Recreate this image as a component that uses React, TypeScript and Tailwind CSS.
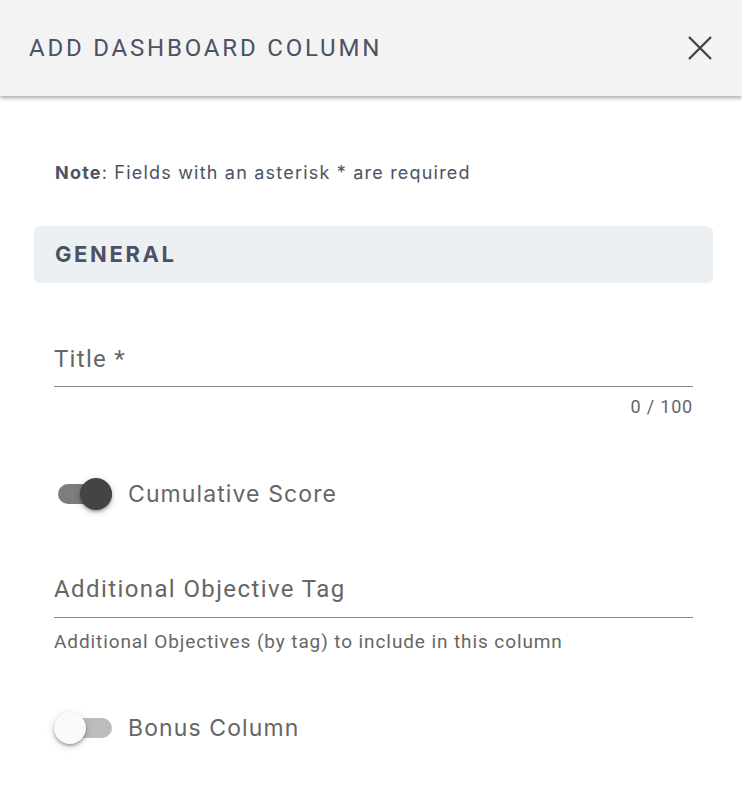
function Toggle({ on }: { on: boolean }) {
  return (
    <div className="relative h-[32px] w-[58px] shrink-0">
      <div
        className={`absolute left-[4px] right-0 top-[6px] h-[20px] rounded-full ${on ? "bg-[#7d7d7d]" : "bg-[#bdbdbd]"}`}
      />
      <div
        className={`absolute top-0 h-[32px] w-[32px] rounded-full shadow-[0_2px_3px_rgba(0,0,0,0.3),0_2px_8px_rgba(0,0,0,0.15)] ${
          on ? "right-0 bg-[#444444]" : "left-0 bg-[#fafafa]"
        }`}
      />
    </div>
  );
}

function CloseIcon() {
  return (
    <svg width="26" height="26" viewBox="0 0 26 26" fill="none" stroke="#444" strokeWidth="2.4" strokeLinecap="butt">
      <path d="M2 2L24 24M24 2L2 24" />
    </svg>
  );
}

export default function App() {
  return (
    <div className="min-h-[790px] w-[742px] bg-white font-['Roboto',sans-serif]">
      <header className="relative z-10 flex h-[96px] items-center justify-between bg-[#f3f3f3] pl-[29px] pr-[29px] shadow-[0_2px_4px_rgba(0,0,0,0.35)]">
        <h1 className="text-[24px] leading-[28px] tracking-[2.8px] text-[#4b5263]">ADD DASHBOARD COLUMN</h1>
        <CloseIcon />
      </header>

      <div className="pl-[34px] pr-[29px] pt-[66px]">
        <p className="pl-[21px] font-['Inter',sans-serif] text-[18px] leading-[22px] tracking-[1.2px] text-[#4b5263]">
          <span className="font-bold">Note</span>: Fields with an asterisk * are required
        </p>

        <div className="mt-[42px] flex h-[57px] items-center rounded-[6px] bg-[#edf0f3] px-[21px]">
          <h2 className="font-['Inter',sans-serif] text-[22px] font-bold tracking-[2.6px] text-[#4b5263]">GENERAL</h2>
        </div>

        <div className="px-[20px]">
          <div className="mt-[62px]">
            <div className="border-b border-[#8a8a8a] pb-[13px] text-[24px] leading-[28px] tracking-[1.3px] text-[#666]">
              Title *
            </div>
            <div className="mt-[10px] text-right text-[18px] leading-[20px] tracking-[0.8px] text-[#666]">0 / 100</div>
          </div>

          <div className="mt-[62px] flex h-[30px] items-center gap-[16px]">
            <Toggle on />
            <span className="font-['Inter',sans-serif] text-[23px] leading-[30px] tracking-[1.1px] text-[#666]">
              Cumulative Score
            </span>
          </div>

          <div className="mt-[66px]">
            <div className="border-b border-[#8a8a8a] pb-[14px] text-[24px] leading-[28px] tracking-[1.4px] text-[#666]">
              Additional Objective Tag
            </div>
            <div className="mt-[13px] text-[19px] leading-[22px] tracking-[0.9px] text-[#666]">
              Additional Objectives (by tag) to include in this column
            </div>
          </div>

          <div className="mt-[60px] flex h-[30px] items-center gap-[16px]">
            <Toggle on={false} />
            <span className="font-['Inter',sans-serif] text-[23px] leading-[30px] tracking-[1.1px] text-[#666]">
              Bonus Column
            </span>
          </div>
        </div>
      </div>
    </div>
  );
}
